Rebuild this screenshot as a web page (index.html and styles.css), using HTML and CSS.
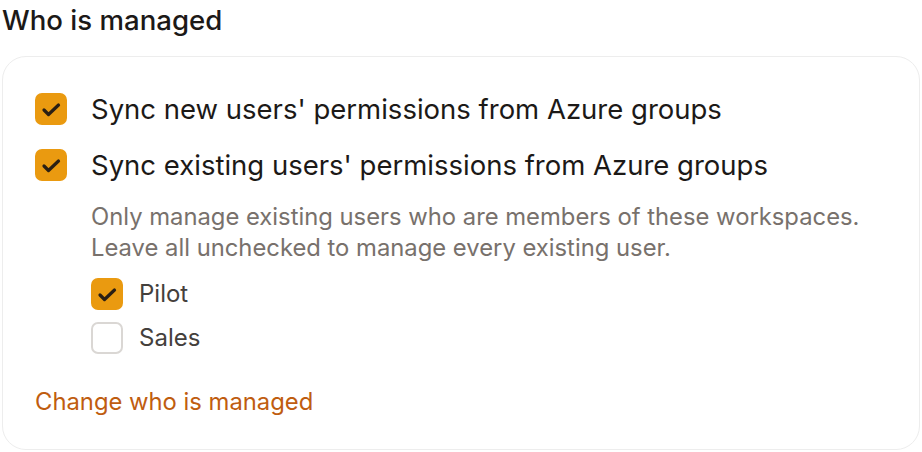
FILE: index.html
```html
<!DOCTYPE html>
<html lang="en">
<head>
    <meta charset="UTF-8">
    <meta name="viewport" content="width=device-width, initial-scale=1.0">
    <title>Who is managed</title>
    <link rel="stylesheet" href="styles.css">
</head>
<body>
    <section class="managed">
        <h2>Who is managed</h2>
        <div class="card">
            <label class="option">
                <span class="box checked">
                    <svg viewBox="0 0 32 32" width="32" height="32"><path d="M9 17l4.5 4.5L23.5 12" fill="none" stroke="#2a1f14" stroke-width="3.2" stroke-linecap="round" stroke-linejoin="round"/></svg>
                </span>
                Sync new users' permissions from Azure groups
            </label>
            <label class="option">
                <span class="box checked">
                    <svg viewBox="0 0 32 32" width="32" height="32"><path d="M9 17l4.5 4.5L23.5 12" fill="none" stroke="#2a1f14" stroke-width="3.2" stroke-linecap="round" stroke-linejoin="round"/></svg>
                </span>
                Sync existing users' permissions from Azure groups
            </label>
            <div class="workspaces">
                <p class="hint">Only manage existing users who are members of these workspaces.<br>Leave all unchecked to manage every existing user.</p>
                <label class="option small">
                    <span class="box checked">
                        <svg viewBox="0 0 32 32" width="32" height="32"><path d="M9 17l4.5 4.5L23.5 12" fill="none" stroke="#2a1f14" stroke-width="3.2" stroke-linecap="round" stroke-linejoin="round"/></svg>
                    </span>
                    Pilot
                </label>
                <label class="option small">
                    <span class="box"></span>
                    Sales
                </label>
            </div>
            <a class="change" href="#">Change who is managed</a>
        </div>
    </section>
</body>
</html>
```

FILE: styles.css
```css
body {
    margin: 0;
    font-family: 'Inter', 'Noto Sans', sans-serif;
    color: #1c1917;
    background: #ffffff;
}
.managed {
    padding: 0 2px;
}
h2 {
    margin: 0 0 16px 0;
    font-size: 27.6px;
    font-weight: 500;
    line-height: 40px;
}
.card {
    border: 1px solid #ededed;
    border-radius: 24px;
    padding: 34px 32px 32px 32px;
    display: flex;
    flex-direction: column;
    gap: 20px;
}
.option {
    display: flex;
    align-items: center;
    gap: 24px;
    font-size: 27.5px;
    line-height: 36px;
    cursor: pointer;
}
.box {
    width: 32px;
    height: 32px;
    box-sizing: border-box;
    border-radius: 7px;
    border: 2px solid #dad7d4;
    background: #ffffff;
    display: flex;
    align-items: center;
    justify-content: center;
    flex-shrink: 0;
}
.box.checked {
    background: #ea9a10;
    border-color: #ea9a10;
}
.box svg {
    flex-shrink: 0;
}
.workspaces {
    margin-left: 56px;
    display: flex;
    flex-direction: column;
    gap: 12px;
    margin-top: -2px;
}
.hint {
    margin: 0 0 3px 0;
    font-size: 23.8px;
    line-height: 31px;
    color: #78716c;
}
.option.small {
    font-size: 24px;
    line-height: 32px;
    gap: 16px;
    color: #44403c;
}
.change {
    margin-top: 13px;
    font-size: 23.8px;
    line-height: 30px;
    color: #bf5d10;
    text-decoration: none;
}
```
